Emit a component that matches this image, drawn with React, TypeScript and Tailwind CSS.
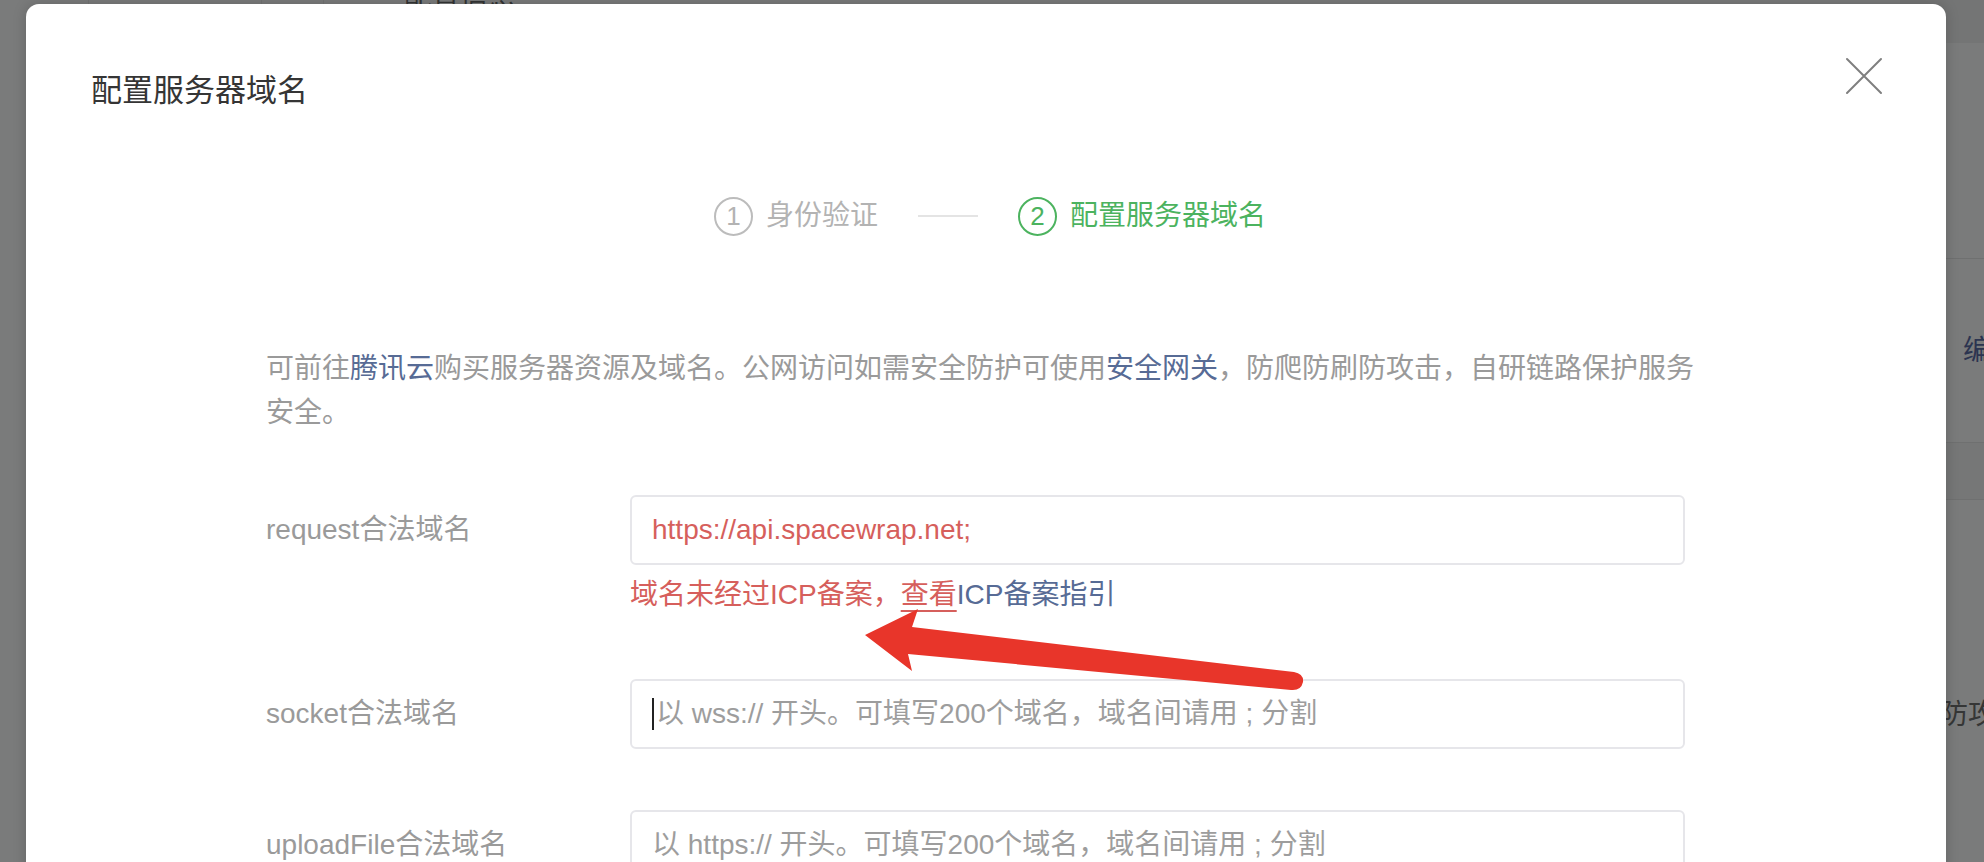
import React from "react";

const FONT = "font-['Liberation_Sans','Noto_Sans_CJK_SC',sans-serif]";

const CloseIcon = () => (
  <svg width="38" height="38" viewBox="0 0 38 38" fill="none">
    <path d="M2 2 L36 36 M36 2 L2 36" stroke="#7f7f7f" strokeWidth="2" strokeLinecap="round" />
  </svg>
);

const Step = ({ num, label, active }: { num: number; label: string; active?: boolean }) => (
  <div className="flex items-center gap-[13px]">
    <div
      className={
        active
          ? "flex h-[39px] w-[39px] items-center justify-center rounded-full border-2 border-[#4cb35f] text-[26px] text-[#4cb35f]"
          : "flex h-[39px] w-[39px] items-center justify-center rounded-full border-2 border-[#bcbcbc] text-[26px] text-[#b3b3b3]"
      }
    >
      {num}
    </div>
    <span className={active ? "text-[28px] text-[#4cb35f]" : "text-[28px] text-[#b3b3b3]"}>{label}</span>
  </div>
);

const FieldRow = ({ label, children, className }: { label: string; children: React.ReactNode; className?: string }) => (
  <div className={"flex " + (className ?? "")}>
    <div className="flex h-[70px] w-[364px] shrink-0 items-center text-[28px] text-[#9a9a9a]">{label}</div>
    <div className="w-[1055px]">{children}</div>
  </div>
);

const Box = ({ children }: { children: React.ReactNode }) => (
  <div className="flex h-[70px] items-center rounded-[6px] border-2 border-[#e6e6ea] pl-[20px] text-[28px]">
    {children}
  </div>
);

const Arrow = () => (
  <svg className="pointer-events-none absolute left-0 top-0" width="1984" height="862" viewBox="0 0 1984 862">
    <path
      d="M865 635 L918 609 L912 627 L1294 672 Q1304 674 1303 682 Q1301 691 1291 690 L908 654 L912 671 Z"
      fill="#e8352a"
    />
  </svg>
);

export default function App() {
  return (
    <div className={"relative h-[862px] w-[1984px] overflow-hidden bg-[#7a7b7b] " + FONT}>
      {/* dimmed page behind the dialog */}
      <div className="flex h-full">
        <div className="w-[89px] border-r border-[#727373]" />
        <div className="w-[173px] border-r border-[#727373]" />
        <div className="w-[62px] border-r border-[#727373]" />
        <div className="flex-1 pl-[80px]">
          <div className="-mt-[22px] text-[28px] text-[#333434]">配置信息</div>
        </div>
        <div className="flex w-[84px] flex-col whitespace-nowrap">
          <div className="h-[43px] shrink-0 bg-[#747575]" />
          <div className="h-[216px] shrink-0 border-b border-[#6f7070]" />
          <div className="flex h-[184px] shrink-0 items-center border-b border-[#6f7070] pl-[63px] text-[28px] text-[#2c3450]">
            编辑
          </div>
          <div className="h-[57px] shrink-0 border-b border-[#6f7070] bg-[#767777]" />
          <div className="flex h-[430px] shrink-0 items-center pl-[40px] text-[28px] text-[#353636]">
            防攻击
          </div>
        </div>
      </div>

      {/* dialog */}
      <div className="absolute left-[26px] top-[4px] h-[900px] w-[1920px] rounded-[13px] bg-white shadow-[0_0_14px_rgba(0,0,0,0.18)]">
        <button className="absolute right-[63px] top-[53px]">
          <CloseIcon />
        </button>

        <div className="pl-[65px] pt-[67px] text-[31px] leading-[40px] text-[#353535]">配置服务器域名</div>

        <div className="mt-[85px] flex h-[40px] items-center justify-center pl-[8px]">
          <Step num={1} label="身份验证" />
          <div className="mx-[40px] h-[2px] w-[60px] bg-[#e4e4e4]" />
          <Step num={2} label="配置服务器域名" active />
        </div>

        <div className="mt-[111px] pl-[240px]">
          <p className="w-[1440px] text-[28px] leading-[44px] text-[#9a9a9a]">
            可前往<span className="text-[#576b95]">腾讯云</span>购买服务器资源及域名。公网访问如需安全防护可使用
            <span className="text-[#576b95]">安全网关</span>，防爬防刷防攻击，自研链路保护服务安全。
          </p>

          <FieldRow label="request合法域名" className="mt-[60px]">
            <Box>
              <span className="text-[#d65f5c]">https://api.spacewrap.net;</span>
            </Box>
            <div className="mt-[10px] text-[28px] leading-[40px] text-[#d65f5c]">
              域名未经过ICP备案，<span className="underline decoration-2 underline-offset-[6px]">查看</span>
              <span className="text-[#576b95]">ICP备案指引</span>
            </div>
          </FieldRow>

          <FieldRow label="socket合法域名" className="mt-[64px]">
            <Box>
              <span className="mr-[2px] h-[32px] w-[2px] bg-[#222]" />
              <span className="text-[#9d9d9d]">以 wss:// 开头。可填写200个域名，域名间请用 ; 分割</span>
            </Box>
          </FieldRow>

          <FieldRow label="uploadFile合法域名" className="mt-[61px]">
            <Box>
              <span className="text-[#9d9d9d]">以 https:// 开头。可填写200个域名，域名间请用 ; 分割</span>
            </Box>
          </FieldRow>
        </div>
      </div>

      <Arrow />
    </div>
  );
}
